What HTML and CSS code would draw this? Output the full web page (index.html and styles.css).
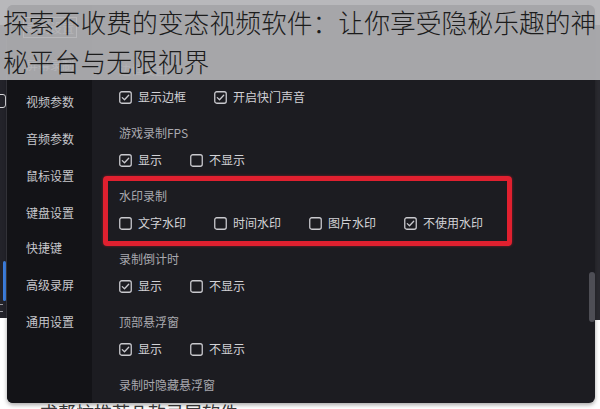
FILE: index.html
```html
<!DOCTYPE html>
<html lang="zh">
<head>
<meta charset="utf-8">
<title>设置</title>
<link rel="stylesheet" href="styles.css">
</head>
<body>
<div class="stage">
  <div class="backwin-left"><span class="side-icon"></span><span class="blue-bar"></span><span class="side-lines"></span></div>
  <div class="backwin-right"></div>

  <div class="dialog">
    <nav class="sidebar">
      <div class="nav-item"><span class="boxed">录制设置</span></div>
      <div class="nav-item">屏幕录制</div>
      <div class="nav-item">视频参数</div>
      <div class="nav-item">音频参数</div>
      <div class="nav-item">鼠标设置</div>
      <div class="nav-item">键盘设置</div>
      <div class="nav-item nav-short">快捷键</div>
      <div class="nav-item">高级录屏</div>
      <div class="nav-item">通用设置</div>
    </nav>

    <main class="main">
      <div class="content">
        <section class="sec">
          <div class="sec-label">边框设置</div>
          <div class="opts">
            <label class="opt"><svg class="cb" viewBox="0 0 13 13"><rect x="0.75" y="0.75" width="11.5" height="11.5" rx="2"/><path d="M3.3 6.6 L5.5 8.8 L9.7 4.3"/></svg>显示边框</label>
            <label class="opt"><svg class="cb" viewBox="0 0 13 13"><rect x="0.75" y="0.75" width="11.5" height="11.5" rx="2"/><path d="M3.3 6.6 L5.5 8.8 L9.7 4.3"/></svg>开启快门声音</label>
          </div>
        </section>

        <section class="sec">
          <div class="sec-label">游戏录制FPS</div>
          <div class="opts">
            <label class="opt"><svg class="cb" viewBox="0 0 13 13"><rect x="0.75" y="0.75" width="11.5" height="11.5" rx="2"/><path d="M3.3 6.6 L5.5 8.8 L9.7 4.3"/></svg>显示</label>
            <label class="opt"><svg class="cb" viewBox="0 0 13 13"><rect x="0.75" y="0.75" width="11.5" height="11.5" rx="2"/></svg>不显示</label>
          </div>
        </section>

        <section class="sec">
          <div class="sec-label">水印录制</div>
          <div class="opts">
            <label class="opt"><svg class="cb" viewBox="0 0 13 13"><rect x="0.75" y="0.75" width="11.5" height="11.5" rx="2"/></svg>文字水印</label>
            <label class="opt"><svg class="cb" viewBox="0 0 13 13"><rect x="0.75" y="0.75" width="11.5" height="11.5" rx="2"/></svg>时间水印</label>
            <label class="opt"><svg class="cb" viewBox="0 0 13 13"><rect x="0.75" y="0.75" width="11.5" height="11.5" rx="2"/></svg>图片水印</label>
            <label class="opt"><svg class="cb" viewBox="0 0 13 13"><rect x="0.75" y="0.75" width="11.5" height="11.5" rx="2"/><path d="M3.3 6.6 L5.5 8.8 L9.7 4.3"/></svg>不使用水印</label>
          </div>
        </section>

        <section class="sec">
          <div class="sec-label">录制倒计时</div>
          <div class="opts">
            <label class="opt"><svg class="cb" viewBox="0 0 13 13"><rect x="0.75" y="0.75" width="11.5" height="11.5" rx="2"/><path d="M3.3 6.6 L5.5 8.8 L9.7 4.3"/></svg>显示</label>
            <label class="opt"><svg class="cb" viewBox="0 0 13 13"><rect x="0.75" y="0.75" width="11.5" height="11.5" rx="2"/></svg>不显示</label>
          </div>
        </section>

        <section class="sec">
          <div class="sec-label">顶部悬浮窗</div>
          <div class="opts">
            <label class="opt"><svg class="cb" viewBox="0 0 13 13"><rect x="0.75" y="0.75" width="11.5" height="11.5" rx="2"/><path d="M3.3 6.6 L5.5 8.8 L9.7 4.3"/></svg>显示</label>
            <label class="opt"><svg class="cb" viewBox="0 0 13 13"><rect x="0.75" y="0.75" width="11.5" height="11.5" rx="2"/></svg>不显示</label>
          </div>
        </section>

        <section class="sec">
          <div class="sec-label">录制时隐藏悬浮窗</div>
        </section>
      </div>
      <div class="scroll"><div class="thumb"></div></div>
      <div class="highlight"></div>
    </main>
  </div>

  <p class="below">求帮忙推荐几款录屏软件</p>

  <div class="overlay">探索不收费的变态视频软件：让你享受隐秘乐趣的神秘平台与无限视界</div>
</div>
</body>
</html>
```

FILE: styles.css
```css
html, body {
  margin: 0;
  padding: 0;
  background: #ffffff;
}
body {
  width: 600px;
  height: 409px;
  overflow: hidden;
  font-family: "Noto Sans CJK SC", "Noto Sans", sans-serif;
}
.stage {
  position: relative;
  width: 600px;
  height: 409px;
  overflow: hidden;
  padding-top: 5px;
  box-sizing: border-box;
}
.backwin-left {
  position: absolute;
  left: 0;
  top: 25px;
  width: 7px;
  height: 293px;
  box-sizing: border-box;
  background: #23232a;
  border-right: 1px solid #3b3b42;
}
.side-icon {
  position: absolute;
  left: -4px;
  top: 69px;
  width: 8px;
  height: 12px;
  border: 1.5px solid #d8d8dc;
  border-radius: 3px;
}
.blue-bar {
  position: absolute;
  left: 3px;
  top: 236px;
  width: 3px;
  height: 40px;
  border-radius: 2px;
  background: #3d7fe0;
}
.side-lines {
  position: absolute;
  left: 0;
  top: 279px;
  width: 3px;
  height: 6px;
  border-top: 1px solid #9a9aa0;
  border-bottom: 1px solid #9a9aa0;
}
.backwin-right {
  position: absolute;
  right: 0;
  top: 25px;
  width: 6px;
  height: 295px;
  background: #2a2a30;
}
.dialog {
  position: relative;
  margin-left: 7px;
  width: 588px;
  height: 398px;
  display: flex;
  background: #1c1c21;
  border-radius: 6px;
  box-shadow: 0 2px 4px rgba(0, 0, 0, 0.35);
  overflow: hidden;
}
.sidebar {
  width: 85px;
  flex: none;
  background: #131317;
  padding-top: 4px;
  box-sizing: border-box;
}
.nav-item {
  height: 37px;
  line-height: 37px;
  padding-left: 19px;
  font-size: 12px;
  color: #c6c6cb;
  white-space: nowrap;
}
.nav-short {
  height: 35px;
  line-height: 33px;
}
.boxed {
  border: 1px solid #e8e8ec;
  padding: 1px 2px;
  margin-left: -3px;
}
.main {
  position: relative;
  flex: 1;
  display: flex;
  min-width: 0;
}
.content {
  flex: 1;
  padding: 55px 0 0 27px;
}
.sec {
  margin-bottom: 16px;
}
.sec-label {
  height: 20px;
  line-height: 20px;
  font-size: 12px;
  color: #a9a9af;
  white-space: nowrap;
}
.opts {
  display: flex;
  gap: 28px;
  height: 20px;
  margin-top: 7px;
  align-items: center;
}
.opt {
  display: flex;
  align-items: center;
  gap: 6px;
  font-size: 12px;
  line-height: 20px;
  color: #d2d2d6;
  white-space: nowrap;
}
.cb {
  width: 13px;
  height: 13px;
  flex: none;
  fill: none;
  stroke: #c9c9ce;
  stroke-width: 1.3;
  stroke-linecap: round;
  stroke-linejoin: round;
}
.scroll {
  width: 6px;
  flex: none;
}
.thumb {
  margin-top: 267px;
  height: 50px;
  border-radius: 3px;
  background: #4e4e55;
}
.highlight {
  position: absolute;
  left: 11px;
  top: 171px;
  width: 409px;
  height: 70px;
  box-sizing: border-box;
  border: 5px solid #e0202f;
  border-radius: 4px;
  box-shadow: 0 0 3px rgba(224, 32, 47, 0.5);
}
.below {
  margin: 0 0 0 40px;
  font-size: 18px;
  line-height: 18px;
  color: #3a3a3a;
  white-space: nowrap;
}
.overlay {
  position: absolute;
  left: 0;
  top: 0;
  width: 600px;
  height: 80px;
  box-sizing: border-box;
  padding: 3px 0 0 3px;
  background: rgba(178, 178, 181, 0.92);
  font-family: "Noto Sans CJK SC", sans-serif;
  font-weight: 300;
  font-size: 25.8px;
  line-height: 38.5px;
  color: #1c1c1c;
  overflow: hidden;
}
```
